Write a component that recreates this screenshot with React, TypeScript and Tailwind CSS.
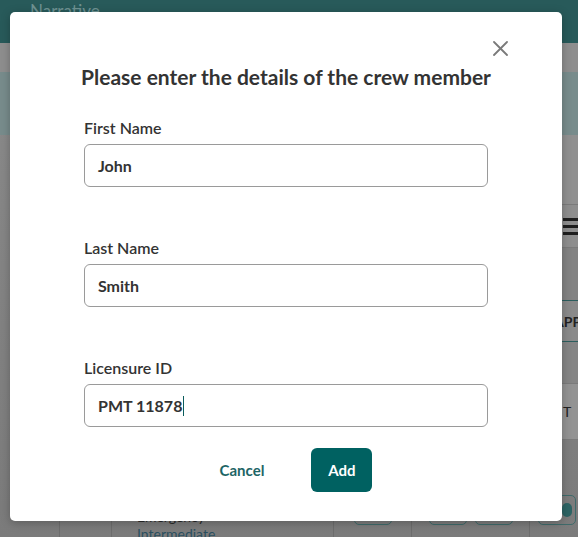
import React from 'react';

const FIELDS = [
  { label: 'First Name', value: 'John' },
  { label: 'Last Name', value: 'Smith' },
  { label: 'Licensure ID', value: 'PMT 11878', focused: true },
];

function Backdrop() {
  return (
    <div className="flex h-[537px] flex-col overflow-hidden bg-gradient-to-b from-[#8d8d8d] to-[#7b7b7b]">
      {/* App header */}
      <div className="h-[43px] shrink-0 bg-[#285a5a] pl-[30px] pt-[1px] text-[17px] leading-[20px] text-[#6f9292]">
        Narrative
      </div>
      <div className="h-[29px] shrink-0 bg-[#8e8e8e]" />
      <div className="h-[63px] shrink-0 bg-[#788c8c]" />

      {/* Table area */}
      <div className="flex h-[355px] shrink-0">
        <div className="flex-1" />
        <div className="flex w-[48px] flex-col text-[14px] text-[#222]">
          <div className="h-[70px] border-b border-[#7b7b7b] bg-[#909090]" />
          <div className="flex h-[43px] flex-col justify-center gap-[4px] border-b border-[#7b7b7b] bg-[#8e8e8e] pl-[33px]">
            <div className="h-[3px] w-[16px] bg-[#1e1e1e]" />
            <div className="h-[3px] w-[16px] bg-[#1e1e1e]" />
            <div className="h-[3px] w-[16px] bg-[#1e1e1e]" />
          </div>
          <div className="h-[52px] bg-[#838383]" />
          <div className="flex h-[42px] items-center border-y border-[#2c5e5e] bg-[#8a8a8a] pl-[24px] font-bold">
            APPI
          </div>
          <div className="h-[42px] border-b border-[#7b7b7b] bg-[#858585]" />
          <div className="flex h-[56px] items-center border-b border-[#7b7b7b] bg-[#939393] pl-[33px]">
            T
          </div>
          <div className="flex-1" />
        </div>
      </div>

      {/* Bottom row */}
      <div className="flex flex-1 text-[14px] leading-[17px]">
        <div className="w-[60px] border-r border-[#6d6d6d]" />
        <div className="w-[52px] border-r border-[#6d6d6d]" />
        <div className="w-[222px] border-r border-[#6d6d6d] pl-[25px] pt-[18px] text-[#2a4f5f]">
          <div className="text-[#2a2a2a]">Emergency</div>
          <div>Intermediate</div>
        </div>
        <div className="w-[78px] border-r border-[#6d6d6d] pl-[20px] pt-[5px]">
          <div className="h-[30px] w-[38px] rounded-[5px] border border-[#3f6b6b]" />
        </div>
        <div className="flex w-[118px] gap-[8px] border-r border-[#6d6d6d] pl-[17px] pt-[5px]">
          <div className="h-[30px] w-[38px] rounded-[5px] border border-[#3f6b6b]" />
          <div className="h-[30px] w-[38px] rounded-[5px] border border-[#3f6b6b]" />
        </div>
        <div className="flex-1 pl-[8px] pt-[5px]">
          <div className="flex h-[30px] w-[38px] items-center justify-center rounded-[5px] border border-[#3f6b6b]">
            <div className="ml-[20px] h-[14px] w-[10px] rounded-full bg-[#2d6464]" />
          </div>
        </div>
      </div>
    </div>
  );
}

export default function App() {
  return (
    <div className="relative h-[537px] w-[578px] overflow-hidden" style={{ fontFamily: 'Lato, "Open Sans", sans-serif' }}>
      <Backdrop />

      {/* Dialog */}
      <div className="absolute left-[10px] top-[12px] flex h-[509px] w-[552px] flex-col rounded-[5px] bg-white shadow-[0_2px_10px_rgba(0,0,0,0.25)]">
        <button className="absolute right-[54px] top-[29px] p-0" aria-label="Close">
          <svg width="15" height="15" viewBox="0 0 15 15" fill="none" stroke="#7a7a7a" strokeWidth="1.8" strokeLinecap="round">
            <line x1="1" y1="1" x2="14" y2="14" />
            <line x1="14" y1="1" x2="1" y2="14" />
          </svg>
        </button>

        <h2 className="mt-[51px] text-center text-[21px] font-bold leading-[28px] text-[#333]">
          Please enter the details of the crew member
        </h2>

        <div className="mt-[27px] flex flex-col gap-[51px] pl-[74px]">
          {FIELDS.map((f) => (
            <div key={f.label} className="flex w-[404px] flex-col gap-[6px]">
              <label className="text-[16px] font-semibold leading-[20px] text-[#333]">{f.label}</label>
              <div className="flex h-[43px] items-center rounded-[6px] border border-[#9a9a9a] pl-[13px] text-[16px] font-bold text-[#333]">
                {f.value}
                {f.focused && <span className="ml-[1px] h-[20px] w-[1px] bg-[#0b5c5c]" />}
              </div>
            </div>
          ))}
        </div>

        <div className="mt-[21px] flex justify-center gap-[23px] pr-[4px]">
          <button className="px-6 text-[15px] font-bold text-[#1d6565]">Cancel</button>
          <button className="h-[44px] w-[61px] rounded-[6px] bg-[#006161] text-[15px] font-bold text-white">Add</button>
        </div>
      </div>
    </div>
  );
}
